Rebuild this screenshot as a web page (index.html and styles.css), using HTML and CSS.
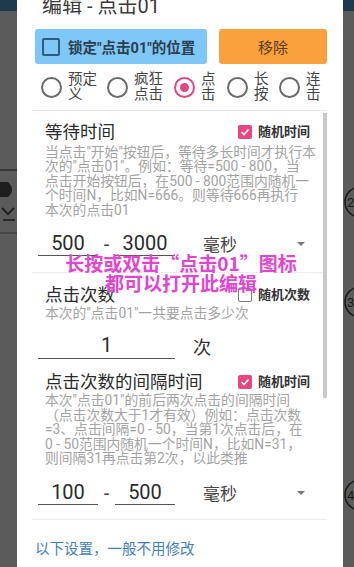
FILE: index.html
```html
<!DOCTYPE html>
<html lang="zh-CN">
<head>
<meta charset="utf-8">
<title>编辑 - 点击01</title>
<link rel="stylesheet" href="styles.css">
</head>
<body>
<svg class="deco-left" width="17" height="80" viewBox="0 0 17 80">
  <line x1="0" y1="10" x2="17" y2="10" stroke="#2b2b2b" stroke-width="1.5"/>
  <path d="M0 22 L8 22 Q16 29.5 8 37 L0 37 Z" fill="#1f1f1f"/>
  <polyline points="2,48 8,54 14,48" fill="none" stroke="#222" stroke-width="2"/>
  <line x1="3" y1="60" x2="15" y2="60" stroke="#2a2a2a" stroke-width="2"/>
  <line x1="0" y1="73" x2="17" y2="73" stroke="#333" stroke-width="1"/>
</svg>
<svg class="deco-right" width="11" height="340" viewBox="0 0 11 340">
  <circle cx="17" cy="22" r="15" fill="none" stroke="#1a1a1a" stroke-width="1.5"/>
  <text x="4" y="27" font-size="13" fill="#1a1a1a" font-family="Roboto, sans-serif">2</text>
  <circle cx="17" cy="122" r="15" fill="none" stroke="#1a1a1a" stroke-width="1.5"/>
  <text x="4" y="127" font-size="13" fill="#1a1a1a" font-family="Roboto, sans-serif">3</text>
  <circle cx="17" cy="315" r="15" fill="none" stroke="#1a1a1a" stroke-width="1.5"/>
  <text x="4" y="320" font-size="13" fill="#1a1a1a" font-family="Roboto, sans-serif">4</text>
</svg>

<div class="dialog">
  <div class="title">编辑 - 点击01</div>

  <div class="actions">
    <div class="lock"><span class="lock-box"></span><span>锁定"点击01"的位置</span></div>
    <div class="remove">移除</div>
  </div>

  <div class="modes">
    <div class="mode mode-a"><span class="radio"></span><span class="lbl">预定<br>义</span></div>
    <div class="mode mode-b"><span class="radio"></span><span class="lbl">疯狂<br>点击</span></div>
    <div class="mode mode-c"><span class="radio on"></span><span class="lbl">点<br>击</span></div>
    <div class="mode mode-d"><span class="radio"></span><span class="lbl">长<br>按</span></div>
    <div class="mode mode-e"><span class="radio"></span><span class="lbl">连<br>击</span></div>
  </div>

  <div class="scroll">
    <div class="scrollbar"></div>

    <div class="section sec-wait">
      <div class="head">
        <span class="htitle">等待时间</span>
        <span class="chk on"><svg width="10" height="10" viewBox="0 0 10 10"><polyline points="1.5,5 4,7.5 8.5,2.5" fill="none" stroke="#fff" stroke-width="1.6"/></svg></span>
        <span class="chklbl">随机时间</span>
      </div>
      <div class="desc">当点击"开始"按钮后，等待多长时间才执行本<br>次的"点击01"。例如：等待=500 - 800，当<br>点击开始按钮后，在500 - 800范围内随机一<br>个时间N，比如N=666。则等待666再执行<br>本次的点击01</div>
      <div class="range">
        <div class="field">500</div>
        <span class="dash">-</span>
        <div class="field">3000</div>
        <div class="spinner"><span class="unit">毫秒</span><span class="caret"></span></div>
      </div>
    </div>

    <div class="sep"></div>

    <div class="section sec-count">
      <div class="head">
        <span class="htitle">点击次数</span>
        <span class="chk off"></span>
        <span class="chklbl">随机次数</span>
      </div>
      <div class="desc">本次的"点击01"一共要点击多少次</div>
      <div class="count-row">
        <div class="field wide">1</div>
        <span class="times">次</span>
      </div>
    </div>

    <div class="section sec-interval">
      <div class="head">
        <span class="htitle">点击次数的间隔时间</span>
        <span class="chk on"><svg width="10" height="10" viewBox="0 0 10 10"><polyline points="1.5,5 4,7.5 8.5,2.5" fill="none" stroke="#fff" stroke-width="1.6"/></svg></span>
        <span class="chklbl">随机时间</span>
      </div>
      <div class="desc">本次"点击01"的前后两次点击的间隔时间<br>（点击次数大于1才有效）例如：点击次数<br>=3、点击间隔=0 - 50，当第1次点击后，在<br>0 - 50范围内随机一个时间N，比如N=31，<br>则间隔31再点击第2次，以此类推</div>
      <div class="range">
        <div class="field">100</div>
        <span class="dash">-</span>
        <div class="field">500</div>
        <div class="spinner"><span class="unit">毫秒</span><span class="caret"></span></div>
      </div>
    </div>

    <div class="sep sep-last"></div>

    <div class="footer-note">以下设置，一般不用修改</div>
  </div>
</div>

<div class="hint">长按或双击“点击01”图标<br>都可以打开此编辑</div>
</body>
</html>
```

FILE: styles.css
```css
html, body {
  margin: 0;
  padding: 0;
}
body {
  display: flow-root;
  position: relative;
  width: 354px;
  height: 567px;
  overflow: hidden;
  background: linear-gradient(#1e3a4c 0, #1e3a4c 11px, #5b5b5b 11px, #5b5b5b 100%);
  font-family: Roboto, "Noto Sans CJK SC", sans-serif;
  color: #333;
}

.deco-left {
  position: absolute;
  left: 0;
  top: 160px;
}
.deco-right {
  position: absolute;
  left: 343px;
  top: 180px;
}

.dialog {
  position: relative;
  z-index: 1;
  width: 326px;
  height: 600px;
  margin: -6px 0 0 17px;
  background: #fff;
}

.title {
  padding-left: 25px;
  font-size: 20px;
  line-height: 24px;
  color: #3a3a3a;
}

.actions {
  display: flex;
  gap: 12px;
  margin-top: 11px;
  padding-left: 18px;
}
.lock {
  box-sizing: border-box;
  width: 172px;
  height: 35px;
  display: flex;
  align-items: center;
  gap: 8px;
  padding-left: 7px;
  background: #7fc7f7;
  border-radius: 3px;
  font-size: 14.5px;
  font-weight: 700;
  color: #2c3e4e;
}
.lock-box {
  width: 14px;
  height: 14px;
  border: 2px solid #2f5b7c;
  border-radius: 2px;
}
.remove {
  width: 108px;
  height: 35px;
  display: flex;
  align-items: center;
  justify-content: center;
  background: #f9a13d;
  border-radius: 3px;
  font-size: 15px;
  color: #5a3a1c;
}

.modes {
  display: flex;
  height: 30px;
  margin-top: 8px;
  padding-left: 24px;
}
.mode {
  display: flex;
  align-items: center;
  gap: 6px;
}
.mode-a { width: 66px; }
.mode-b { width: 67px; }
.mode-c { width: 53px; }
.mode-d { width: 52px; }
.radio {
  width: 17px;
  height: 17px;
  border: 2px solid #6a6a6a;
  border-radius: 50%;
  display: grid;
  place-items: center;
}
.radio.on {
  border-color: #e2467e;
}
.radio.on::after {
  content: "";
  width: 9px;
  height: 9px;
  border-radius: 50%;
  background: #e2467e;
}
.lbl {
  font-size: 14.5px;
  line-height: 15px;
  color: #444;
}

.scroll {
  position: relative;
  width: 295px;
  height: 470px;
  margin: 8px 0 0 15px;
  border-top: 1px solid #e8e8e8;
}
.scrollbar {
  position: absolute;
  right: 0;
  top: 2px;
  width: 4px;
  height: 285px;
  background: #c9c9c9;
}

.section {
  padding: 0 17px 0 13px;
}
.head {
  display: flex;
  align-items: center;
  height: 22px;
}
.sec-wait .head { margin-top: 10px; }
.sec-count .head { margin-top: 11px; }
.sec-interval .head { margin-top: 12px; }
.htitle {
  flex: 1;
  font-size: 17.5px;
  line-height: 22px;
  color: #2a2a2a;
}
.chk {
  box-sizing: border-box;
  width: 14px;
  height: 14px;
  margin-right: 6px;
  border-radius: 2px;
  display: grid;
  place-items: center;
}
.chk.on {
  background: #e6477f;
}
.chk.off {
  border: 1.5px solid #777;
}
.chklbl {
  font-size: 13px;
  line-height: 22px;
  font-weight: 700;
  color: #333;
}

.desc {
  font-size: 13.8px;
  line-height: 14.4px;
  color: #a3a3a3;
  white-space: nowrap;
}
.sec-wait .desc { margin-top: 2px; }

.range {
  display: flex;
  align-items: flex-end;
  margin: 14px -17px 0 -7px;
}
.sec-interval .range { margin-top: 15px; }
.field {
  width: 60px;
  font-size: 20px;
  line-height: 24px;
  text-align: center;
  color: #2a2a2a;
  border-bottom: 1px solid #555;
}
.field.wide {
  width: 137px;
  padding-bottom: 1px;
}
.dash {
  width: 17px;
  font-size: 20px;
  line-height: 24px;
  text-align: center;
  color: #444;
  align-self: center;
}
.spinner {
  flex: 1;
  height: 25px;
  display: flex;
  align-items: center;
  padding: 0 22px 0 28px;
}
.unit {
  flex: 1;
  font-size: 17px;
  color: #444;
}
.caret {
  width: 0;
  height: 0;
  border-left: 4px solid transparent;
  border-right: 4px solid transparent;
  border-top: 4px solid #777;
}

.count-row {
  display: flex;
  align-items: center;
  margin: 13px 0 0 -7px;
}
.times {
  margin-left: 18px;
  font-size: 18px;
  color: #333;
}

.sep {
  height: 1px;
  margin-top: 16px;
  background: #ececec;
}
.sep-last {
  margin-top: 14px;
}

.footer-note {
  margin-top: 21px;
  padding-left: 3px;
  font-size: 14.5px;
  line-height: 18px;
  color: #3f7fc0;
}

.hint {
  position: absolute;
  z-index: 2;
  top: 253px;
  left: 31px;
  width: 300px;
  text-align: center;
  font-family: "Noto Sans CJK SC", sans-serif;
  font-size: 19px;
  line-height: 20px;
  font-weight: 700;
  color: #e046cf;
}
```
